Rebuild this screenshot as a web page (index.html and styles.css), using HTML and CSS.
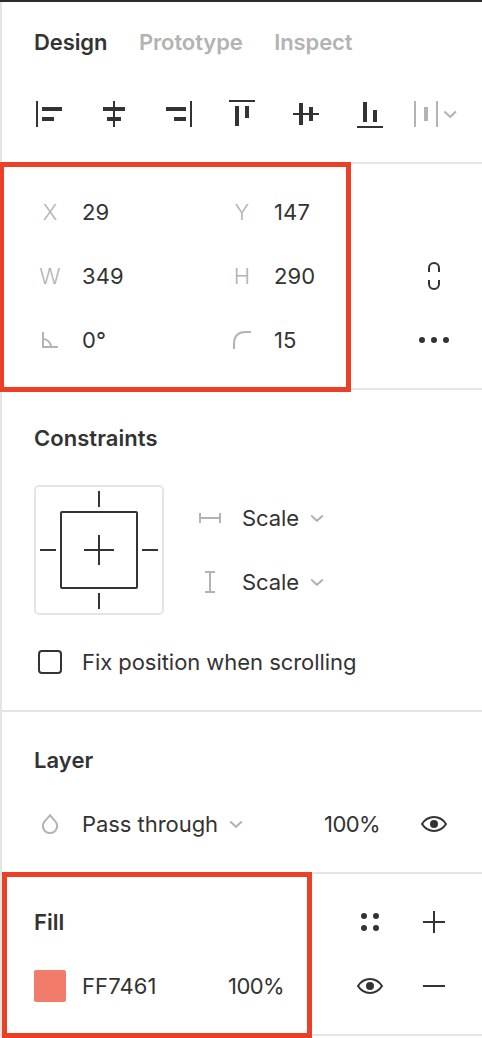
FILE: index.html
```html
<!DOCTYPE html>
<html lang="en">
<head>
<meta charset="utf-8">
<title>Design panel</title>
<link rel="stylesheet" href="styles.css">
</head>
<body>
<main class="panel">
  <section class="section header">
    <nav class="tabs">
      <span class="tab tab-active">Design</span>
      <span class="tab">Prototype</span>
      <span class="tab">Inspect</span>
    </nav>
    <div class="align-row">
      <svg class="icon" viewBox="-32 -20 64 40"><path d="M-14-13h2v26h-2zM-8-7h20v4H-8zM-8 3H4v4H-8z"/></svg>
      <svg class="icon" viewBox="-32 -20 64 40"><path d="M-1-13h2v26h-2zM-11-7h22v4h-22zM-7 3H7v4H-7z"/></svg>
      <svg class="icon" viewBox="-32 -20 64 40"><path d="M12-13h2v26h-2zM-12-7H8v4h-20zM-4 3H8v4H-4z"/></svg>
      <svg class="icon" viewBox="-32 -20 64 40"><path d="M-13-14h26v2h-26zM-7-8h4v20h-4zM3-8h4V4H3z"/></svg>
      <svg class="icon" viewBox="-32 -20 64 40"><path d="M-13-1h26v2h-26zM-7-11h4v22h-4zM3-7h4V7H3z"/></svg>
      <svg class="icon" viewBox="-32 -20 64 40"><path d="M-13 12h26v2h-26zM-7-12h4V8h-4zM3-4h4V8H3z"/></svg>
      <svg class="icon muted" viewBox="-32 -20 64 40"><path d="M-20-13h2v26h-2zM2-13h2v26H2zM-10-7h4V7h-4z"/><path class="line" d="M10.4-2.6 16.2 2.8 22-2.6"/></svg>
    </div>
  </section>

  <section class="section transform">
    <span class="label">X</span><span>29</span>
    <span class="label">Y</span><span>147</span>
    <span></span>
    <span class="label">W</span><span>349</span>
    <span class="label">H</span><span>290</span>
    <svg class="icon" viewBox="-32 -20 64 40"><path class="line" d="M-5-4v-4a5 5 0 0 1 10 0v4M-5 4v4a5 5 0 0 0 10 0V4"/></svg>
    <svg class="icon muted" viewBox="-32 -20 64 40"><path class="line" d="M-7-8V7H8M-7-1a8 8 0 0 1 8 8"/></svg><span>0°</span>
    <svg class="icon muted" viewBox="-32 -20 64 40"><path class="line" d="M-8 9V4C-8-4-4-8 4-8h5"/></svg><span>15</span>
    <svg class="icon" viewBox="-32 -20 64 40"><circle cx="-12" r="3"/><circle r="3"/><circle cx="12" r="3"/></svg>
    <div class="highlight highlight-transform"></div>
  </section>

  <section class="section">
    <h2 class="title">Constraints</h2>
    <div class="constraints">
      <svg class="constraint-box" viewBox="-65 -65 130 130">
        <rect class="frame" x="-64" y="-64" width="128" height="128" rx="4"/>
        <rect class="line" x="-38" y="-38" width="76" height="76" rx="1"/>
        <path class="line" d="M0-59v16M0 43v16M-59 0h16M43 0h16M-15 0h30M0-15v30"/>
      </svg>
      <div class="constraint-options">
        <div class="option">
          <svg class="icon muted" viewBox="-32 -20 64 40"><path class="line" d="M-10-5V5M10-5V5M-10 0h20"/></svg>
          <span>Scale</span>
          <svg class="chevron muted" viewBox="-8 -8 16 16"><path class="line" d="M-5.8-2.6 0 2.8l5.8-5.4"/></svg>
        </div>
        <div class="option">
          <svg class="icon muted" viewBox="-32 -20 64 40"><path class="line" d="M-5-10H5M-5 10H5M0-10v20"/></svg>
          <span>Scale</span>
          <svg class="chevron muted" viewBox="-8 -8 16 16"><path class="line" d="M-5.8-2.6 0 2.8l5.8-5.4"/></svg>
        </div>
      </div>
    </div>
    <div class="check-row">
      <span class="checkbox"></span>
      <span class="text">Fix position when scrolling</span>
    </div>
  </section>

  <section class="section">
    <h2 class="title">Layer</h2>
    <div class="layer-row">
      <svg class="icon muted" viewBox="-32 -20 64 40"><path class="line" d="M0-8.7-5-3.2C-9.2 1.4-6.5 9 0 9S9.2 1.4 5-3.2Z"/></svg>
      <span class="blend text">Pass through
        <svg class="chevron muted" viewBox="-8 -8 16 16"><path class="line" d="M-5.8-2.6 0 2.8l5.8-5.4"/></svg>
      </span>
      <span class="percent">100%</span>
      <svg class="icon" viewBox="-32 -20 64 40"><path class="line" d="M-12 0C-6-9.3 6-9.3 12 0 6 9.3-6 9.3-12 0Z"/><circle r="4"/></svg>
    </div>
  </section>

  <section class="section fill">
    <div class="fill-head">
      <h2 class="title">Fill</h2>
      <svg class="icon" viewBox="-32 -20 64 40"><circle cx="-6" cy="-6" r="3"/><circle cx="6" cy="-6" r="3"/><circle cx="-6" cy="6" r="3"/><circle cx="6" cy="6" r="3"/></svg>
      <svg class="icon" viewBox="-32 -20 64 40"><path class="line" d="M-11 0h22M0-11v22"/></svg>
    </div>
    <div class="fill-row">
      <span class="swatch"></span>
      <span>FF7461</span>
      <span class="percent">100%</span>
      <svg class="icon" viewBox="-32 -20 64 40"><path class="line" d="M-12 0C-6-9.3 6-9.3 12 0 6 9.3-6 9.3-12 0Z"/><circle r="4"/></svg>
      <svg class="icon" viewBox="-32 -20 64 40"><path class="line" d="M-11 0h22"/></svg>
    </div>
    <div class="highlight highlight-fill"></div>
  </section>
</main>
</body>
</html>
```

FILE: styles.css
```css
* {
  box-sizing: border-box;
}

body {
  margin: 0;
  background: #fff;
}

.panel {
  height: 1038px;
  border-top: 2px solid #2c2c2c;
  box-shadow: inset 2px 0 #e5e5e5;
  padding-left: 2px;
  color: #333;
  font: 400 22px/64px Inter, sans-serif;
  letter-spacing: 0.11px;
  overflow: hidden;
}

.section {
  position: relative;
  padding: 16px 16px 16px;
  border-bottom: 2px solid #e5e5e5;
}

.header {
  height: 162px;
  padding-top: 8px;
}

.title {
  margin: 0 0 0 16px;
  font-size: 22px;
  font-weight: 600;
  letter-spacing: 0.05px;
}

.icon {
  display: block;
  width: 64px;
  height: 40px;
  fill: #333;
  stroke: none;
}

.line {
  fill: none;
  stroke: #333;
  stroke-width: 2;
}

.muted {
  fill: #b3b3b3;
}

.muted .line {
  stroke: #b3b3b3;
}

.tabs {
  display: flex;
  gap: 31.5px;
  padding-left: 16px;
  color: #b3b3b3;
  font-weight: 600;
  letter-spacing: -0.1px;
}

.tab-active {
  color: #333;
}

.align-row {
  display: grid;
  grid-template-columns: repeat(7, 64px);
  align-items: center;
  height: 80px;
}

.transform {
  display: grid;
  grid-template-columns: 64px 128px 64px 128px 64px;
  grid-auto-rows: 64px;
  align-items: center;
}

.label {
  text-align: center;
  color: #b3b3b3;
  font-weight: 300;
}

.constraints {
  display: flex;
  height: 130px;
  margin: 15px 0 15px 16px;
}

.constraint-box {
  width: 130px;
  height: 130px;
}

.frame {
  fill: none;
  stroke: #e5e5e5;
  stroke-width: 2;
}

.constraint-options {
  padding: 1px 0 0 14px;
  letter-spacing: -0.1px;
}

.option {
  display: flex;
  align-items: center;
  height: 64px;
}

.text {
  letter-spacing: -0.05px;
}

.percent {
  letter-spacing: -0.55px;
}

.chevron {
  width: 16px;
  height: 16px;
  margin-left: 10px;
}

.check-row {
  display: flex;
  align-items: center;
  gap: 20px;
  height: 64px;
  padding-left: 20px;
}

.checkbox {
  width: 24px;
  height: 24px;
  border: 2px solid #333;
  border-radius: 4px;
}

.layer-row {
  display: grid;
  grid-template-columns: 64px 242px 78px 64px;
  align-items: center;
}

.blend {
  display: flex;
  align-items: center;
}

.fill-head {
  display: grid;
  grid-template-columns: 320px 64px 64px;
  align-items: center;
}

.fill-row {
  display: grid;
  grid-template-columns: 64px 146px 110px 64px 64px;
  align-items: center;
}

.swatch {
  width: 32px;
  height: 32px;
  margin-left: 16px;
  border-radius: 2px;
  background: #f07c69;
}

.highlight {
  position: absolute;
  border: 5px solid #eb4025;
}

.highlight-transform {
  left: -2px;
  top: -2px;
  width: 351px;
  height: 230px;
  border-left-width: 4px;
}

.highlight-fill {
  left: 0;
  top: -2px;
  width: 310px;
  height: 166px;
}
```
